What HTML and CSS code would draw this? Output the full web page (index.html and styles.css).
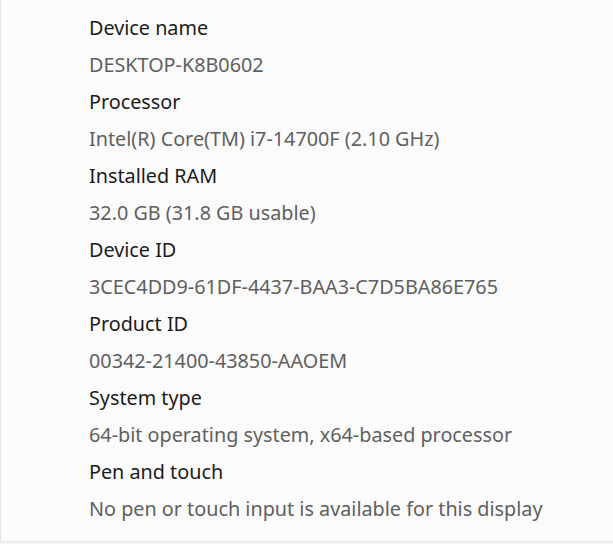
FILE: index.html
```html
<!DOCTYPE html>
<html lang="en">
<head>
<meta charset="utf-8">
<title>Device specifications</title>
<link rel="stylesheet" href="styles.css">
</head>
<body>
<div class="card">
  <dl class="specs">
    <dt>Device name</dt>
    <dd>DESKTOP-K8B0602</dd>
    <dt>Processor</dt>
    <dd>Intel(R) Core(TM) i7-14700F (2.10 GHz)</dd>
    <dt>Installed RAM</dt>
    <dd>32.0 GB (31.8 GB usable)</dd>
    <dt>Device ID</dt>
    <dd>3CEC4DD9-61DF-4437-BAA3-C7D5BA86E765</dd>
    <dt>Product ID</dt>
    <dd>00342-21400-43850-AAOEM</dd>
    <dt>System type</dt>
    <dd>64-bit operating system, x64-based processor</dd>
    <dt>Pen and touch</dt>
    <dd>No pen or touch input is available for this display</dd>
  </dl>
</div>
</body>
</html>
```
FILE: styles.css
```css
html, body {
  margin: 0;
  padding: 0;
  background: #f3f3f3;
}
body {
  width: 613px;
  height: 544px;
  overflow: hidden;
  font-family: "Noto Sans", "Segoe UI", sans-serif;
}
.card {
  background: #fbfbfb;
  border-left: 1px solid #e5e5e5;
  border-bottom: 1px solid #e5e5e5;
  height: 542px;
  box-sizing: border-box;
  padding: 9px 0 0 88px;
}
.specs {
  margin: 0;
  font-size: 19.8px;
  line-height: 37px;
}
.specs dt {
  color: #1b1b1b;
}
.specs dd {
  margin: 0;
  color: #5f5f5f;
}
```
